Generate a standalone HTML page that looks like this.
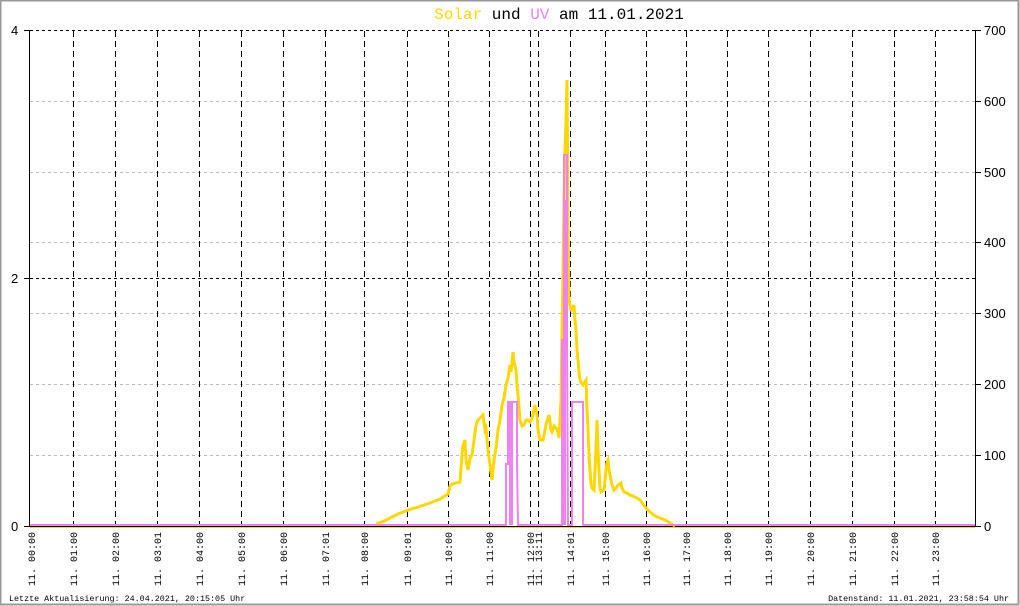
<!DOCTYPE html>
<html><head><meta charset="utf-8"><style>
html,body{margin:0;padding:0;background:#fff;}
svg{display:block;}
.m{font-family:"Liberation Mono","DejaVu Sans Mono",monospace;}
.s{font-family:"Liberation Sans","DejaVu Sans",sans-serif;}
</style></head><body>
<svg width="1020" height="606" viewBox="0 0 1020 606" xmlns="http://www.w3.org/2000/svg">
<rect x="0.5" y="0.5" width="1018" height="604" fill="#fff" stroke="#999" stroke-width="2"/>
<text x="559" y="19" text-anchor="middle" class="m" font-size="16"><tspan fill="#ffd700">Solar</tspan><tspan fill="#000"> und </tspan><tspan fill="#ee82ee">UV</tspan><tspan fill="#000"> am 11.01.2021</tspan></text>
<g stroke="#bbb" stroke-width="1" stroke-dasharray="3,3">
<line x1="30" y1="101.5" x2="975" y2="101.5"/><line x1="30" y1="172.5" x2="975" y2="172.5"/><line x1="30" y1="242.5" x2="975" y2="242.5"/><line x1="30" y1="313.5" x2="975" y2="313.5"/><line x1="30" y1="384.5" x2="975" y2="384.5"/><line x1="30" y1="455.5" x2="975" y2="455.5"/>
</g>
<g stroke="#000" stroke-width="1" stroke-dasharray="3,3">
<line x1="30" y1="30.5" x2="975" y2="30.5"/><line x1="30" y1="278.5" x2="975" y2="278.5"/>
</g>
<g stroke="#000" stroke-width="1" stroke-dasharray="6,4">
<line x1="73.5" y1="31" x2="73.5" y2="526"/><line x1="115.5" y1="31" x2="115.5" y2="526"/><line x1="157.5" y1="31" x2="157.5" y2="526"/><line x1="199.5" y1="31" x2="199.5" y2="526"/><line x1="241.5" y1="31" x2="241.5" y2="526"/><line x1="283.5" y1="31" x2="283.5" y2="526"/><line x1="325.5" y1="31" x2="325.5" y2="526"/><line x1="364.5" y1="31" x2="364.5" y2="526"/><line x1="407.5" y1="31" x2="407.5" y2="526"/><line x1="448.5" y1="31" x2="448.5" y2="526"/><line x1="489.5" y1="31" x2="489.5" y2="526"/><line x1="530.5" y1="31" x2="530.5" y2="526"/><line x1="538.5" y1="31" x2="538.5" y2="526"/><line x1="570.5" y1="31" x2="570.5" y2="526"/><line x1="605.5" y1="31" x2="605.5" y2="526"/><line x1="646.5" y1="31" x2="646.5" y2="526"/><line x1="686.5" y1="31" x2="686.5" y2="526"/><line x1="727.5" y1="31" x2="727.5" y2="526"/><line x1="768.5" y1="31" x2="768.5" y2="526"/><line x1="810.5" y1="31" x2="810.5" y2="526"/><line x1="852.5" y1="31" x2="852.5" y2="526"/><line x1="894.5" y1="31" x2="894.5" y2="526"/><line x1="935.5" y1="31" x2="935.5" y2="526"/>
</g>
<g stroke="#000" stroke-width="1">
<line x1="29.5" y1="30" x2="29.5" y2="527"/><line x1="24" y1="30.5" x2="30" y2="30.5"/><line x1="24" y1="278.5" x2="30" y2="278.5"/><line x1="24" y1="526.5" x2="30" y2="526.5"/>
<line x1="975.5" y1="30" x2="975.5" y2="527"/>
<line x1="975" y1="30.5" x2="981" y2="30.5"/><line x1="975" y1="101.5" x2="981" y2="101.5"/><line x1="975" y1="172.5" x2="981" y2="172.5"/><line x1="975" y1="242.5" x2="981" y2="242.5"/><line x1="975" y1="313.5" x2="981" y2="313.5"/><line x1="975" y1="384.5" x2="981" y2="384.5"/><line x1="975" y1="455.5" x2="981" y2="455.5"/><line x1="975" y1="526.5" x2="981" y2="526.5"/>
<line x1="30" y1="526.5" x2="975" y2="526.5"/>
</g>
<g class="s" font-size="13" fill="#000">
<text x="11" y="35">4</text><text x="11" y="283">2</text><text x="11" y="531">0</text>
<text x="984" y="35">700</text><text x="984" y="106">600</text><text x="984" y="177">500</text><text x="984" y="247">400</text><text x="984" y="318">300</text><text x="984" y="389">200</text><text x="984" y="460">100</text><text x="984" y="531">0</text>
</g>
<line x1="30" y1="527.5" x2="975" y2="527.5" stroke="#ffd700" stroke-width="1"/>
<polyline fill="none" stroke="#ffd700" stroke-width="3" stroke-linejoin="miter" points="376,524 384,521 390,518 398,514 408,510 418,507 430,503 440,499 448,494 450,486 452,484 460,482 462,455 463,445 465,440 466,460 468,470 470,458 472,455 474,440 476,425 478,420 480,418 483,415 485,430 486,428 488,450 490,465 492,480 494,460 496,448 498,430 500,420 502,405 504,398 506,385 508,378 510,365 511,372 513,352 514,362 516,370 517,385 518,395 520,420 522,426 524,425 526,420 528,420 530,422 532,418 534,410 535,405 537,415 538,430 540,440 543,440 545,430 546,425 548,418 549,415 551,430 552,432 554,426 556,428 558,432 559,438 561,400 562,330 563,270 564,200 565,150 566,120 567,80 568,220 569,300 571,310 572,310 574,305 575,320 576,330 577,350 578,360 579,372 580,380 582,384 583,385 586,380 587,410 588,430 589,455 590,470 591,484 592,488 594,490 595,470 596,448 597,420 598,450 599,470 600,488 601,492 604,490 605,480 606,470 607,462 608,460 609,470 610,475 612,485 614,490 616,488 618,485 621,483 622,488 624,492 627,493 630,495 635,497 640,500 643,504 646,508 650,512 655,516 660,518 665,520 670,523 675,526"/>
<g fill="none" stroke="#ee82ee" stroke-width="2">
<polyline points="30,525 506,525 506,464 508,464 508,402 517,402 517,464 518,525 562,525 562,340 564,340 564,155 567,155 567,340 568,525 572,525 572,402 583,402 583,525 975,525"/>
<line x1="510" y1="525" x2="510" y2="464"/><line x1="512" y1="525" x2="512" y2="402"/>
</g>
<rect x="508" y="402" width="5" height="62" fill="#ee82ee"/>
<rect x="563" y="200" width="3" height="325" fill="#ee82ee"/>
<g class="m" font-size="10" fill="#000" text-anchor="end">
<text transform="translate(35,532) rotate(-90)">11. 00:00</text>
<text transform="translate(77,532) rotate(-90)">11. 01:00</text>
<text transform="translate(119,532) rotate(-90)">11. 02:00</text>
<text transform="translate(161,532) rotate(-90)">11. 03:01</text>
<text transform="translate(203,532) rotate(-90)">11. 04:00</text>
<text transform="translate(245,532) rotate(-90)">11. 05:00</text>
<text transform="translate(287,532) rotate(-90)">11. 06:00</text>
<text transform="translate(329,532) rotate(-90)">11. 07:01</text>
<text transform="translate(368,532) rotate(-90)">11. 08:00</text>
<text transform="translate(411,532) rotate(-90)">11. 09:01</text>
<text transform="translate(452,532) rotate(-90)">11. 10:00</text>
<text transform="translate(493,532) rotate(-90)">11. 11:00</text>
<text transform="translate(534,532) rotate(-90)">11. 12:00</text>
<text transform="translate(542,532) rotate(-90)">11. 13:11</text>
<text transform="translate(574,532) rotate(-90)">11. 14:01</text>
<text transform="translate(609,532) rotate(-90)">11. 15:00</text>
<text transform="translate(650,532) rotate(-90)">11. 16:00</text>
<text transform="translate(690,532) rotate(-90)">11. 17:00</text>
<text transform="translate(731,532) rotate(-90)">11. 18:00</text>
<text transform="translate(772,532) rotate(-90)">11. 19:00</text>
<text transform="translate(814,532) rotate(-90)">11. 20:00</text>
<text transform="translate(856,532) rotate(-90)">11. 21:00</text>
<text transform="translate(898,532) rotate(-90)">11. 22:00</text>
<text transform="translate(939,532) rotate(-90)">11. 23:00</text>
</g>
<g class="m" font-size="8.4" fill="#000">
<text x="9" y="601">Letzte Aktualisierung: 24.04.2021, 20:15:05 Uhr</text>
<text x="1009" y="601" text-anchor="end">Datenstand: 11.01.2021, 23:58:54 Uhr</text>
</g>
</svg>
</body></html>
